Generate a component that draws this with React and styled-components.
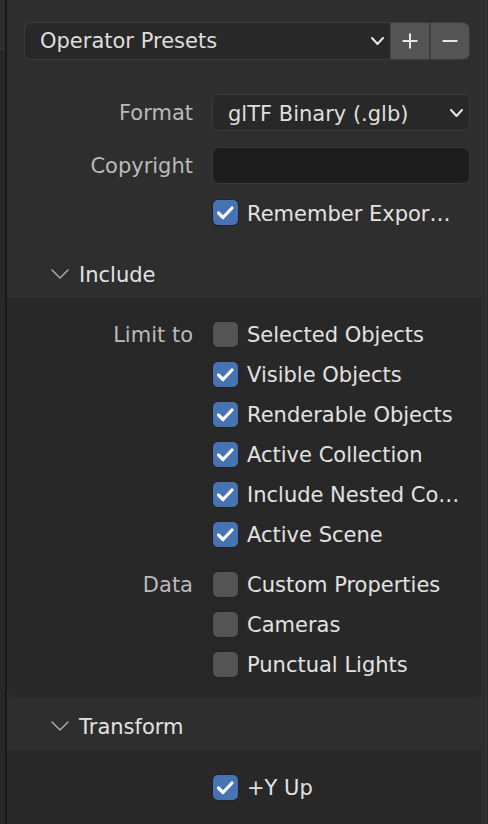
import React from "react";
import styled, { createGlobalStyle } from "styled-components";

const Global = createGlobalStyle`
  html, body { margin: 0; padding: 0; background: #2e2e2e; }
  body { font-family: "DejaVu Sans", "Noto Sans", sans-serif; -webkit-font-smoothing: antialiased; }
  * { box-sizing: border-box; }
`;

const Frame = styled.div`
  width: 488px;
  height: 824px;
  display: flex;
  overflow: hidden;
  background: #2e2e2e;
`;

const LeftEdge = styled.div`
  width: 5px;
  flex: none;
  display: flex;
  flex-direction: column;
  background: #272727;
`;

const LeftEdgeTop = styled.div`
  height: 50px;
  background: #2d2d2d;
  border-bottom: 1px solid #3a3a3a;
`;

const Divider = styled.div`
  width: 2px;
  flex: none;
  background: #171717;
`;

const Main = styled.div`
  flex: 1;
  min-width: 0;
  display: flex;
  flex-direction: column;
  background: #2e2e2e;
`;

const RightEdge = styled.div`
  width: 4px;
  flex: none;
  background: #2c2c2c;
  border-left: 2px solid #2e2e2e;
  border-right: 1px solid #262626;
  box-shadow: inset 1px 0 0 #383838;
`;

const TopSection = styled.div`
  padding: 22px 14px 0 17px;
  display: flex;
  flex-direction: column;
`;

const PresetBar = styled.div`
  display: flex;
  height: 38px;
`;

const Text = styled.span`
  padding-top: ${(p) => (p.$nudge ? 2 : 0)}px;
`;

const PresetSelect = styled.div`
  flex: 1;
  display: flex;
  align-items: center;
  justify-content: space-between;
  padding: 0 6px 0 15px;
  background: #282828;
  border: 1px solid #3b3b3b;
  border-right: none;
  border-radius: 7px 0 0 7px;
  color: #dedede;
  font-size: 21px;
`;

const IconButton = styled.div`
  width: ${(p) => p.$w}px;
  flex: none;
  display: flex;
  align-items: center;
  justify-content: center;
  background: #545454;
  border: 1px solid #3b3b3b;
  border-left: ${(p) => (p.$sep ? "1px solid #434343" : "none")};
  border-radius: ${(p) => (p.$last ? "0 7px 7px 0" : "0")};
`;

const FormGrid = styled.div`
  display: grid;
  grid-template-columns: 169px 1fr;
  column-gap: 19px;
  align-items: center;
  margin-top: 34px;
  row-gap: 16px;
`;

const FieldLabel = styled.div`
  text-align: right;
  color: #bababa;
  font-size: 21px;
  height: 37px;
  line-height: 35px;
  padding-top: 2px;
  white-space: nowrap;
`;

const Dropdown = styled.div`
  height: 37px;
  display: flex;
  align-items: center;
  justify-content: space-between;
  padding: 0 6px 0 15px;
  background: #282828;
  border: 1px solid #3b3b3b;
  border-radius: 7px;
  color: #dedede;
  font-size: 21px;
`;

const TextField = styled.div`
  height: 37px;
  background: #1d1d1d;
  border: 1px solid #393939;
  border-radius: 7px;
`;

const RememberRow = styled.div`
  grid-column: 2;
  height: 37px;
  margin-top: -6px;
  display: flex;
  align-items: center;
`;

const PanelHeader = styled.div`
  height: 48px;
  margin-top: ${(p) => p.$mt}px;
  margin-right: 2px;
  display: flex;
  align-items: center;
  gap: 10px;
  padding-left: 44px;
  background: #2e2e2e;
  color: #e2e2e2;
  font-size: 21px;
`;

const PanelBody = styled.div`
  margin-right: 2px;
  background: #282828;
  border-radius: ${(p) => (p.$open ? "0" : "0 0 8px 8px")};
  padding: ${(p) => p.$pt}px 0 ${(p) => p.$pb}px 0;
  display: flex;
  flex-direction: column;
  gap: 10px;
  flex: ${(p) => (p.$grow ? 1 : "none")};
`;

const Group = styled.div`
  display: grid;
  grid-template-columns: 186px 1fr;
  column-gap: 19px;
  align-items: start;
`;

const GroupLabel = styled.div`
  grid-row: 1;
  text-align: right;
  color: #bababa;
  font-size: 21px;
  height: 40px;
  line-height: 38px;
  padding-top: 2px;
  white-space: nowrap;
`;

const Options = styled.div`
  grid-column: 2;
  grid-row: 1;
  display: flex;
  flex-direction: column;
`;

const CheckRow = styled.div`
  height: 40px;
  display: flex;
  align-items: center;
  gap: 9px;
  color: #e2e2e2;
  font-size: 21px;
  white-space: nowrap;
`;

const Box = styled.div`
  width: 25px;
  height: 25px;
  margin-left: 1px;
  flex: none;
  border-radius: 5px;
  background: ${(p) => (p.$on ? "#4772b3" : "#545454")};
  box-shadow: 0 0 0 1px #222222;
  display: flex;
  align-items: center;
  justify-content: center;
`;

const Chevron = ({ w = 12, h = 7, color = "#e6e6e6", sw = 2 }) => (
  <svg width={w + 2} height={h + 2} viewBox={`-1 -1 ${w + 2} ${h + 2}`}>
    <polyline points={`0,0 ${w / 2},${h} ${w},0`} fill="none" stroke={color} strokeWidth={sw} strokeLinecap="round" strokeLinejoin="round" />
  </svg>
);

const Check = ({ on }) => (
  <Box $on={on}>
    {on && (
      <svg width="25" height="25" viewBox="0 0 25 25">
        <polyline points="5.5,13 10,17.5 19,8" fill="none" stroke="#ffffff" strokeWidth="3.2" strokeLinecap="round" strokeLinejoin="round" />
      </svg>
    )}
  </Box>
);

const CheckItem = ({ on, children }) => (
  <CheckRow>
    <Check on={on} />
    <Text $nudge>{children}</Text>
  </CheckRow>
);

export default function App() {
  return (
    <>
      <Global />
      <Frame>
        <LeftEdge>
          <LeftEdgeTop />
        </LeftEdge>
        <Divider />
        <Main>
          <TopSection>
            <PresetBar>
              <PresetSelect>
                <Text>Operator Presets</Text>
                <Chevron w={11} h={6} />
              </PresetSelect>
              <IconButton $w={40} $sep>
                <svg width="18" height="18" viewBox="0 0 18 18">
                  <path d="M9 1.5V16.5M1.5 9H16.5" stroke="#e6e6e6" strokeWidth="2" />
                </svg>
              </IconButton>
              <IconButton $w={40} $sep $last>
                <svg width="18" height="18" viewBox="0 0 18 18">
                  <path d="M1.5 9H16.5" stroke="#e6e6e6" strokeWidth="2" />
                </svg>
              </IconButton>
            </PresetBar>
            <FormGrid>
              <FieldLabel>Format</FieldLabel>
              <Dropdown>
                <Text $nudge>glTF Binary (.glb)</Text>
                <Chevron w={11} h={6} />
              </Dropdown>
              <FieldLabel>Copyright</FieldLabel>
              <TextField />
              <RememberRow>
                <CheckItem on>Remember Expor…</CheckItem>
              </RememberRow>
            </FormGrid>
          </TopSection>

          <PanelHeader $mt={19}>
            <Chevron w={16} h={8} color="#a6a6a6" sw={1.6} />
            <Text $nudge>Include</Text>
          </PanelHeader>
          <PanelBody $pt={16} $pb={14}>
            <Group>
              <GroupLabel>Limit to</GroupLabel>
              <Options>
                <CheckItem>Selected Objects</CheckItem>
                <CheckItem on>Visible Objects</CheckItem>
                <CheckItem on>Renderable Objects</CheckItem>
                <CheckItem on>Active Collection</CheckItem>
                <CheckItem on>Include Nested Co…</CheckItem>
                <CheckItem on>Active Scene</CheckItem>
              </Options>
            </Group>
            <Group>
              <GroupLabel>Data</GroupLabel>
              <Options>
                <CheckItem>Custom Properties</CheckItem>
                <CheckItem>Cameras</CheckItem>
                <CheckItem>Punctual Lights</CheckItem>
              </Options>
            </Group>
          </PanelBody>

          <PanelHeader $mt={4}>
            <Chevron w={16} h={8} color="#a6a6a6" sw={1.6} />
            <Text $nudge>Transform</Text>
          </PanelHeader>
          <PanelBody $pt={17} $pb={0} $open $grow>
            <Group>
              <Options>
                <CheckItem on>+Y Up</CheckItem>
              </Options>
            </Group>
          </PanelBody>
        </Main>
        <RightEdge />
      </Frame>
    </>
  );
}
